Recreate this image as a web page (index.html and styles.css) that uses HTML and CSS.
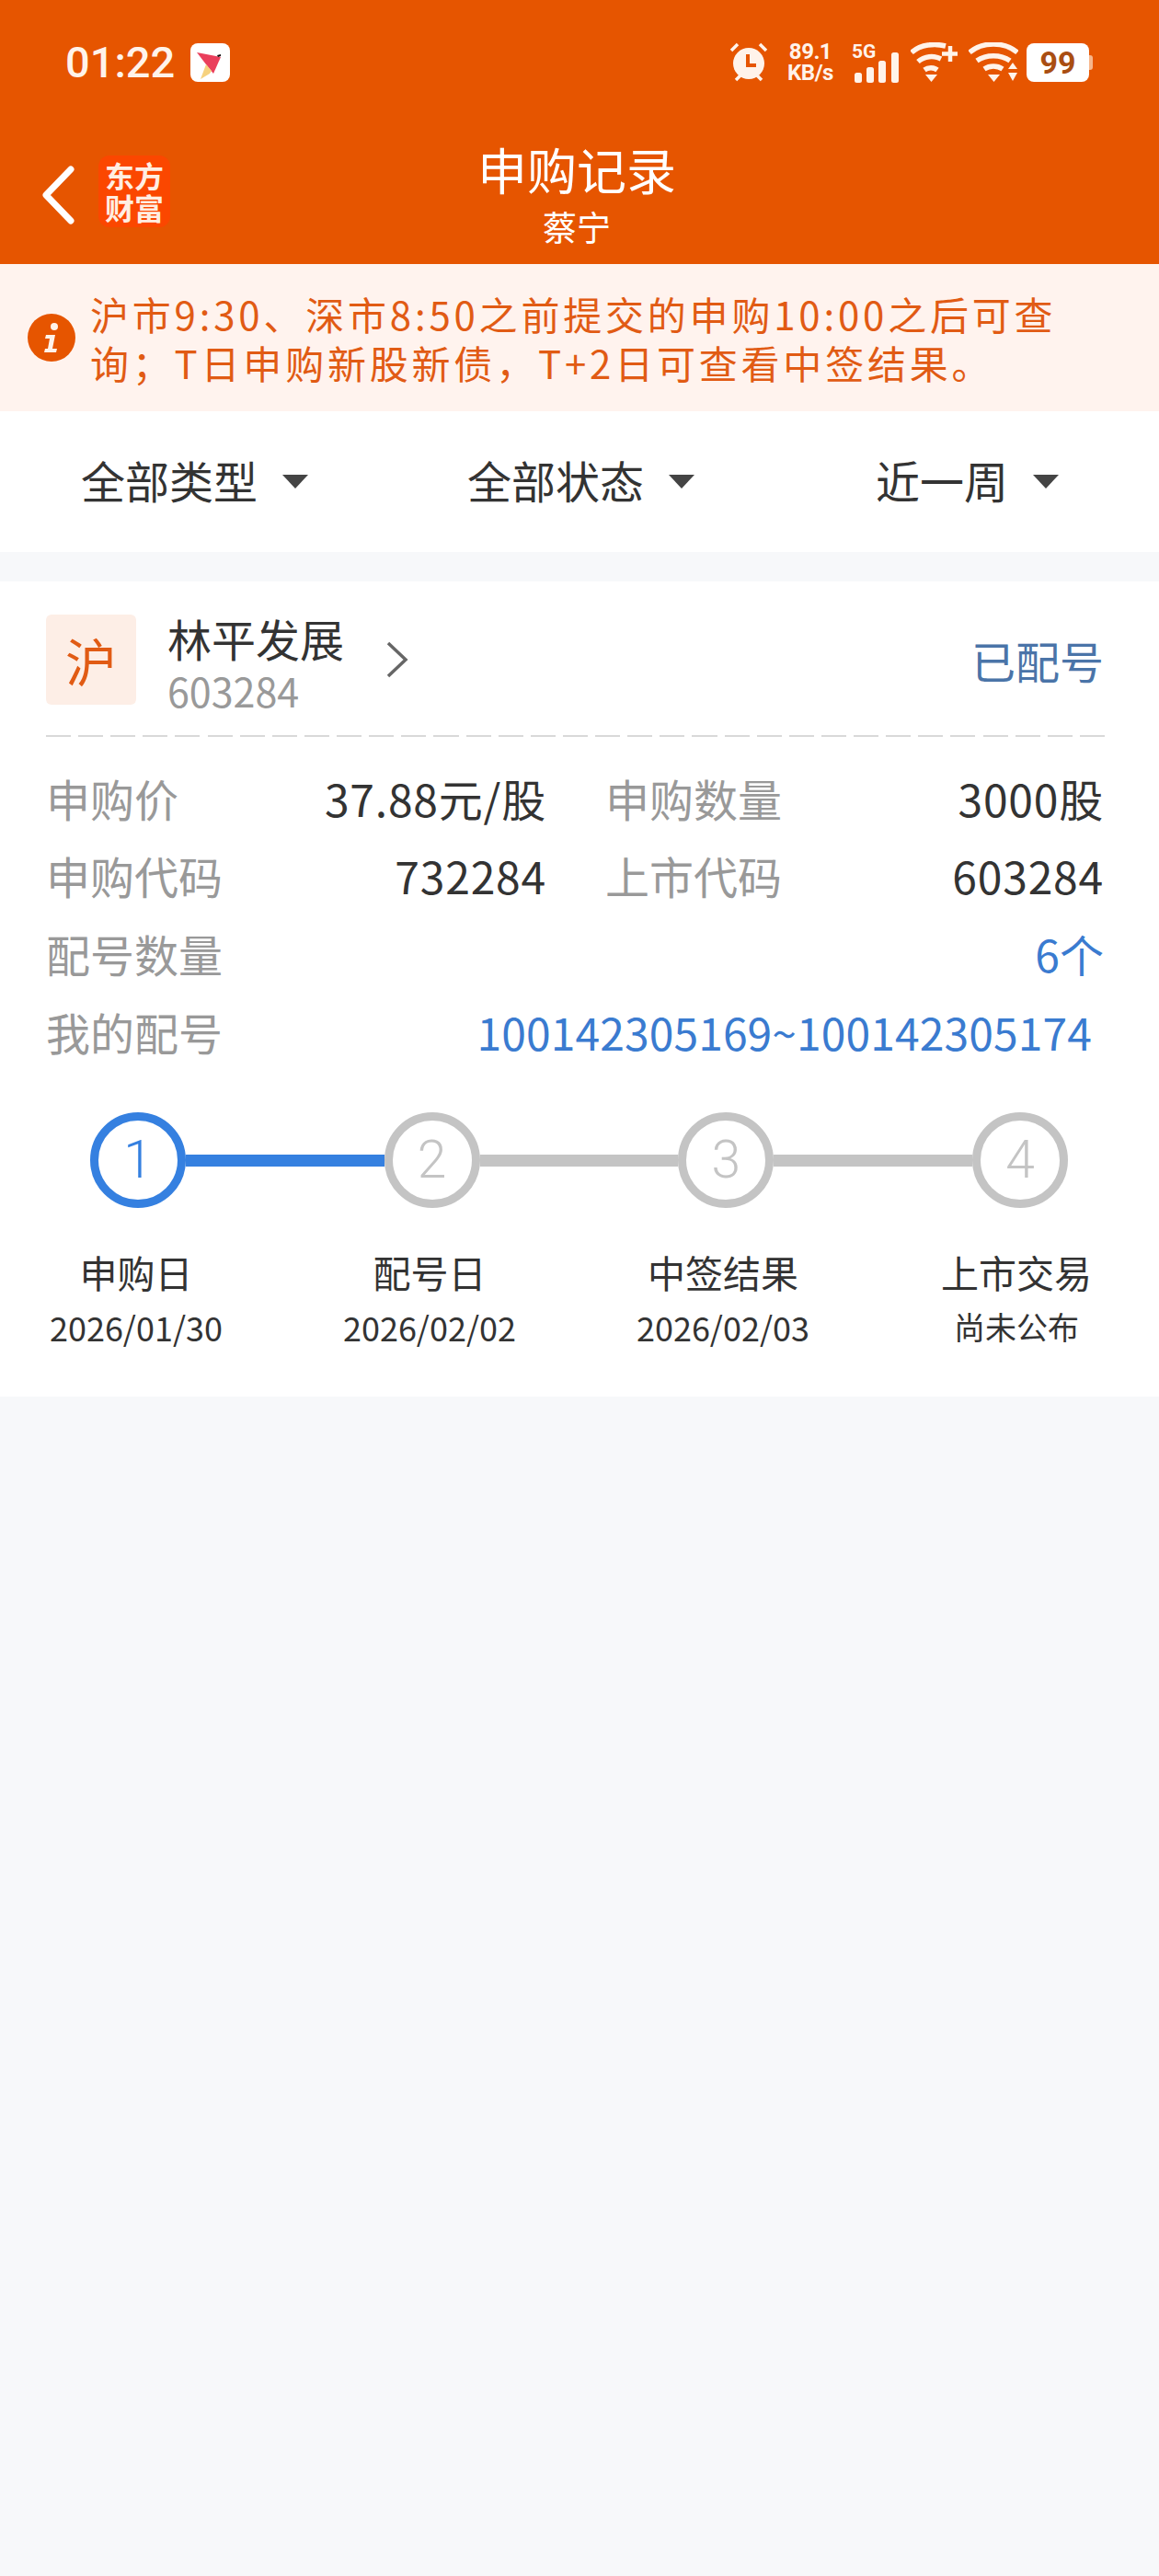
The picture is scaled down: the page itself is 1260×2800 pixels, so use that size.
FILE: index.html
```html
<!DOCTYPE html>
<html lang="zh-CN">
<head>
    <meta charset="UTF-8">
    <meta name="viewport" content="width=device-width, initial-scale=1.0">
    <title>申购记录</title>
    <link rel="stylesheet" href="styles.css">
</head>
<body>
    <header class="app-header">
        <div class="status-bar">
            <div class="status-left">
                <span class="clock">01:22</span>
                <svg class="app-icon" viewBox="0 0 43 42">
                    <rect width="43" height="42" rx="8" fill="#fff"/>
                    <polygon points="7,10 33,15 25,33 17,23" fill="#ea3f5c"/>
                    <polygon points="17,23 23,30 21,33 11,39" fill="#f6d27f"/>
                    <polygon points="29,13 33,12 33,14 30,15" fill="#111"/>
                </svg>
            </div>
            <div class="status-right">
                <svg class="ic-alarm" viewBox="0 0 44 44">
                    <circle cx="22" cy="23" r="17" fill="#fff3ea"/>
                    <path d="M21 13v12h9" fill="none" stroke="#e65500" stroke-width="4"/>
                    <path d="M3 9l7-7M41 9l-7-7M8 41l5-5M36 41l-5-5" stroke="#fff3ea" stroke-width="3.5" fill="none"/>
                </svg>
                <div class="net-speed"><span>89.1</span><span>KB/s</span></div>
                <svg class="ic-signal" viewBox="0 0 52 44">
                    <text x="0" y="17" class="ic-5g">5G</text>
                    <rect x="3" y="33" width="8" height="11" rx="2.5" fill="#fff3ea"/>
                    <rect x="16" y="27" width="8" height="17" rx="2.5" fill="#fff3ea"/>
                    <rect x="29" y="20" width="8" height="24" rx="2.5" fill="#fff3ea"/>
                    <rect x="43" y="11" width="8" height="33" rx="2.5" fill="#fff3ea"/>
                </svg>
                <svg class="ic-wifi-plus" viewBox="0 0 52 44">
                    <path d="M1 11C11 2 26 1 38 4M8 21c7-6 17-7 25-3M15 30c4-3 10-3 14 0" fill="none" stroke="#fff3ea" stroke-width="5.5"/>
                    <polygon points="16,35 29,35 22.5,43" fill="#fff3ea"/>
                    <path d="M43 4v17M34 12.500h17" stroke="#fff3ea" stroke-width="4.500" fill="none"/>
                </svg>
                <svg class="ic-wifi" viewBox="0 0 54 44">
                    <path d="M1 11c14-12 38-12 52 0M9 20c10-7 26-7 36 0M17 29c6-4 14-4 20 0" fill="none" stroke="#fff3ea" stroke-width="5.500"/>
                    <polygon points="21,35 34,35 27.500,43" fill="#fff3ea"/>
                    <polygon points="43,29 53,29 48,22" fill="#fff3ea"/>
                    <polygon points="43,33 53,33 48,42" fill="#fff3ea"/>
                </svg>
                <div class="battery"><span class="battery-level">99</span><span class="battery-nub"></span></div>
            </div>
        </div>
        <nav class="nav-bar">
            <div class="nav-left">
                <svg class="ic-back" viewBox="0 0 38 64">
                    <path d="M33 4L6 32l27 28" fill="none" stroke="#fff" stroke-width="7" stroke-linecap="round" stroke-linejoin="round"/>
                </svg>
                <div class="brand-logo">东方<br>财富</div>
            </div>
            <div class="nav-title">
                <div class="title">申购记录</div>
                <div class="subtitle">蔡宁</div>
            </div>
        </nav>
    </header>

    <section class="notice">
        <svg class="ic-info" viewBox="0 0 52 52">
            <circle cx="26" cy="26" r="26" fill="#e65500"/>
            <circle cx="29" cy="14" r="4" fill="#fff3ea"/>
            <path d="M20 23h10l-3 15h5l-1 4H18l1-4h3l2-11h-5z" fill="#fff3ea"/>
        </svg>
        <p class="notice-text">沪市9:30、深市8:50之前提交的申购10:00之后可查询；T日申购新股新债，T+2日可查看中签结果。</p>
    </section>

    <section class="filters">
        <div class="filter"><span>全部类型</span><i class="caret"></i></div>
        <div class="filter"><span>全部状态</span><i class="caret"></i></div>
        <div class="filter"><span>近一周</span><i class="caret"></i></div>
    </section>

    <section class="card">
        <div class="card-head">
            <div class="market-tag">沪</div>
            <div class="stock">
                <div class="stock-name">林平发展</div>
                <div class="stock-code">603284</div>
            </div>
            <svg class="ic-more" viewBox="0 0 26 40">
                <path d="M3 2l19 18L3 38" fill="none" stroke="#666" stroke-width="3.500"/>
            </svg>
            <div class="stock-status">已配号</div>
        </div>

        <div class="details">
            <div class="pair-row">
                <div class="pair"><span class="label">申购价</span><span class="value">37.88元/股</span></div>
                <div class="pair"><span class="label">申购数量</span><span class="value">3000股</span></div>
            </div>
            <div class="pair-row">
                <div class="pair"><span class="label">申购代码</span><span class="value">732284</span></div>
                <div class="pair"><span class="label">上市代码</span><span class="value">603284</span></div>
            </div>
            <div class="wide-row"><span class="label">配号数量</span><span class="value link">6个</span></div>
            <div class="wide-row numbers"><span class="label">我的配号</span><span class="value link">100142305169~100142305174</span></div>
        </div>

        <div class="track">
            <div class="dot active">1</div>
            <div class="bar active"></div>
            <div class="dot">2</div>
            <div class="bar"></div>
            <div class="dot">3</div>
            <div class="bar"></div>
            <div class="dot">4</div>
        </div>
        <div class="steps">
            <div class="step"><div class="step-name">申购日</div><div class="step-date">2026/01/30</div></div>
            <div class="step"><div class="step-name">配号日</div><div class="step-date">2026/02/02</div></div>
            <div class="step"><div class="step-name">中签结果</div><div class="step-date">2026/02/03</div></div>
            <div class="step"><div class="step-name">上市交易</div><div class="step-date pending">尚未公布</div></div>
        </div>
    </section>
</body>
</html>
```

FILE: styles.css
```css
* {
    margin: 0;
    padding: 0;
    box-sizing: border-box;
}

body {
    width: 1260px;
    min-height: 2800px;
    background: #f7f8fa;
    font-family: "Noto Sans CJK SC", "Noto Sans", sans-serif;
    color: #333;
    overflow: hidden;
}

.app-header {
    height: 287px;
    background: #e65500;
    color: #fff;
}

/* status bar */
.status-bar {
    height: 136px;
    display: flex;
    justify-content: space-between;
    align-items: flex-start;
    padding: 46px 72px 0 71px;
}

.status-left {
    display: flex;
    align-items: center;
    gap: 17px;
}

.clock {
    font-family: Roboto, sans-serif;
    font-size: 47px;
    font-weight: 500;
    line-height: 43px;
    color: #fff3ea;
}

.app-icon {
    width: 43px;
    height: 42px;
}

.status-right {
    display: flex;
    align-items: center;
    height: 44px;
}

.ic-alarm {
    width: 44px;
    height: 44px;
    margin-right: 19px;
}

.net-speed {
    display: flex;
    flex-direction: column;
    align-items: center;
    width: 52px;
    font-family: Roboto, sans-serif;
    font-size: 24px;
    font-weight: 700;
    letter-spacing: -0.5px;
    line-height: 23px;
    color: #fff3ea;
    margin-right: 19px;
}

.ic-signal {
    width: 52px;
    height: 44px;
    margin-right: 12px;
    overflow: visible;
}

.ic-5g {
    font-family: Roboto, sans-serif;
    font-size: 21px;
    font-weight: 700;
    fill: #fff3ea;
}

.ic-wifi-plus {
    width: 52px;
    height: 44px;
    margin-right: 11px;
}

.ic-wifi {
    width: 54px;
    height: 44px;
    margin-right: 9px;
}

.battery {
    display: flex;
    align-items: center;
}

.battery-level {
    width: 68px;
    height: 42px;
    background: #fff;
    border-radius: 8px;
    font-family: Roboto, sans-serif;
    font-size: 34px;
    font-weight: 700;
    line-height: 42px;
    text-align: center;
    color: #a94e12;
}

.battery-nub {
    width: 4px;
    height: 16px;
    background: #f7b78c;
    border-radius: 0 3px 3px 0;
}

/* nav */
.nav-bar {
    height: 151px;
    display: grid;
    grid-template-columns: 1fr auto 1fr;
    align-items: center;
}

.nav-left {
    display: flex;
    align-items: center;
    padding-left: 44px;
    gap: 25px;
}

.ic-back {
    width: 38px;
    height: 64px;
}

.brand-logo {
    width: 78px;
    height: 78px;
    background: #fb4700;
    border-radius: 12px;
    font-size: 32px;
    font-weight: 700;
    line-height: 35px;
    text-align: center;
    padding-top: 4px;
    color: #ffeee2;
    margin-top: -8px;
}

.nav-title {
    grid-column: 2;
    text-align: center;
    margin: -4px 6px 0 0;
}

.title {
    font-size: 54px;
    line-height: 72px;
}

.subtitle {
    font-size: 37px;
    line-height: 52px;
}

/* notice */
.notice {
    height: 160px;
    background: #fff3ee;
    display: flex;
    align-items: center;
    padding: 0 60px 0 30px;
    gap: 16px;
}

.ic-info {
    width: 52px;
    height: 52px;
    flex: none;
}

.notice-text {
    font-size: 42px;
    line-height: 53px;
    letter-spacing: 3.8px;
    color: #e15b14;
}

/* filters */
.filters {
    height: 153px;
    background: #fff;
    display: grid;
    grid-template-columns: repeat(3, 420px);
    align-items: center;
}

.filter {
    display: flex;
    justify-content: center;
    align-items: center;
    gap: 27px;
    padding-left: 3px;
    font-size: 48px;
}

.filter span {
    margin-bottom: 6px;
}

.caret {
    width: 0;
    height: 0;
    border-left: 14px solid transparent;
    border-right: 14px solid transparent;
    border-top: 15px solid #444;
}

/* card */
.card {
    margin-top: 32px;
    height: 886px;
    background: #fff;
}

.card-head {
    height: 169px;
    margin: 0 59px 0 50px;
    padding-top: 36px;
    display: flex;
    align-items: flex-start;
    background: repeating-linear-gradient(90deg, #d9d9d9 0 27px, transparent 27px 35.125px) left bottom / 100% 2px no-repeat;
}

.market-tag {
    width: 98px;
    height: 98px;
    background: #fdeee6;
    border-radius: 6px;
    font-size: 56px;
    line-height: 98px;
    text-align: center;
    color: #e15b14;
}

.stock {
    margin-left: 34px;
    width: 237px;
}

.stock-name {
    font-size: 48px;
    line-height: 56px;
    margin-top: -3px;
}

.stock-code {
    font-size: 43px;
    line-height: 58px;
    color: #999;
}

.ic-more {
    width: 26px;
    height: 40px;
    margin-top: 29px;
}

.stock-status {
    margin: 0 1px 0 auto;
    font-size: 48px;
    line-height: 98px;
    color: #4a74a8;
}

.details {
    padding: 24px 60px 0 50px;
}

.pair-row {
    display: grid;
    grid-template-columns: 544px 1fr;
    column-gap: 64px;
    height: 84px;
}

.pair,
.wide-row {
    display: flex;
    justify-content: space-between;
    align-items: center;
}

.wide-row {
    height: 85px;
}

.numbers {
    padding-right: 13px;
}

.label {
    font-size: 48px;
    color: #999;
}

.value {
    font-size: 48px;
    letter-spacing: 0.8px;
    color: #333;
}

.value.link {
    letter-spacing: 0.1px;
    color: #3a7bd0;
}

/* steps */
.track {
    display: flex;
    align-items: center;
    padding: 0 99px 0 98px;
    margin-top: 46px;
}

.dot {
    width: 104px;
    height: 104px;
    flex: none;
    border: 9px solid #c4c4c4;
    border-radius: 50%;
    font-family: Roboto, sans-serif;
    font-size: 57px;
    font-weight: 300;
    line-height: 86px;
    text-align: center;
    color: #c4c4c4;
}

.dot.active {
    border-color: #3580e0;
    color: #3580e0;
}

.bar {
    flex: 1;
    height: 13px;
    background: #c4c4c4;
}

.bar.active {
    background: #3580e0;
}

.steps {
    display: grid;
    grid-template-columns: repeat(4, 240px);
    column-gap: 79px;
    padding-left: 28px;
    margin-top: 39px;
    text-align: center;
}

.step-name {
    font-size: 41px;
    line-height: 60px;
}

.step-date {
    font-size: 36px;
    line-height: 60px;
}

.step-date.pending {
    font-size: 34px;
}
```
